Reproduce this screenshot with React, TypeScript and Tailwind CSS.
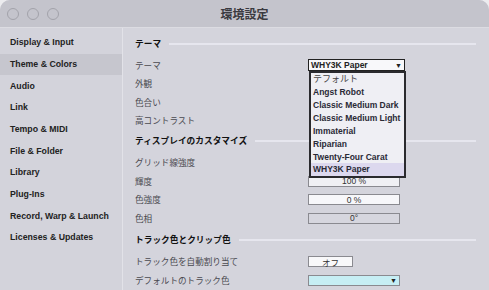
import React from 'react';

const NAV = [
  'Display & Input',
  'Theme & Colors',
  'Audio',
  'Link',
  'Tempo & MIDI',
  'File & Folder',
  'Library',
  'Plug-Ins',
  'Record, Warp & Launch',
  'Licenses & Updates',
];

const THEMES = [
  'テフォルト',
  'Angst Robot',
  'Classic Medium Dark',
  'Classic Medium Light',
  'Immaterial',
  'Riparian',
  'Twenty-Four Carat',
  'WHY3K Paper',
];

const latin = "font-['Liberation_Sans','Noto_Sans_CJK_JP',sans-serif]";
const jp = "font-['Noto_Sans_CJK_JP','Liberation_Sans',sans-serif]";

function SectionHeader({ title, className = '' }: { title: string; className?: string }) {
  return (
    <div className={`h-[20px] flex items-center pr-[13px] ${className}`}>
      <span className={`${jp} text-[8.7px] font-bold text-[#111]`}>{title}</span>
      <div className="flex-1 h-[1.5px] bg-[#e6e6ee] ml-[8px]" />
    </div>
  );
}

function Row({ label, children }: { label: string; children?: React.ReactNode }) {
  return (
    <div className="h-[18.5px] flex items-center">
      <span className={`${jp} w-[173px] text-[8.6px] text-[#4a4a50]`}>{label}</span>
      {children}
    </div>
  );
}

function ValueBox({ value, bg }: { value: string; bg: string }) {
  return (
    <div
      className={`${latin} w-[92px] h-[11px] border border-[#8a8a90] flex items-center justify-center text-[8.5px] text-[#333] leading-none ${bg}`}
    >
      {value}
    </div>
  );
}

export default function App() {
  return (
    <div className="w-[489px] h-[290px] bg-[#ececef] overflow-hidden">
      <div className="w-full h-full rounded-t-[10px] overflow-hidden flex flex-col bg-[#d4d4dc]">
        {/* Title bar */}
        <div className="relative h-[28px] bg-[#c4c4cc] border-b border-[#dcdce2] flex items-center shrink-0">
          <div className="flex gap-[8px] pl-[7px]">
            <div className="w-[12px] h-[12px] rounded-full border border-[#a2a2aa]" />
            <div className="w-[12px] h-[12px] rounded-full border border-[#a2a2aa]" />
            <div className="w-[12px] h-[12px] rounded-full border border-[#a2a2aa]" />
          </div>
          <div className={`${jp} absolute inset-0 flex items-center justify-center text-[12px] font-bold text-[#3a3a40]`}>
            環境設定
          </div>
        </div>

        <div className="flex flex-1">
          {/* Sidebar */}
          <div className="w-[123px] bg-[#d3d3db] border-r border-[#e2e2e8] pt-[4px] shrink-0">
            {NAV.map((item) => (
              <div
                key={item}
                className={`${latin} h-[21.7px] flex items-center pl-[10px] text-[8.75px] font-bold text-[#222] ${
                  item === 'Theme & Colors' ? 'bg-[#c6c6ce]' : ''
                }`}
              >
                {item}
              </div>
            ))}
          </div>

          {/* Content */}
          <div className="relative flex-1 pl-[12px] pt-[6px]">
            <SectionHeader title="テーマ" />
            <div className="mt-[2px]">
              <Row label="テーマ">
                <div className={`${latin} w-[97px] h-[12px] bg-[#f8f8fa] border border-[#222] flex items-center justify-between px-[2px] text-[8.5px] font-bold text-[#222] leading-none`}>
                  <span>WHY3K Paper</span>
                  <span className="text-[7px]">▼</span>
                </div>
              </Row>
              <Row label="外観" />
              <Row label="色合い" />
              <Row label="高コントラスト" />
            </div>

            <SectionHeader title="ティスプレイのカスタマイズ" className="mt-[1px]" />
            <div className="mt-[2.5px]">
              <Row label="グリッド線強度" />
              <Row label="輝度">
                <ValueBox value="100 %" bg="bg-[#f0f0f4]" />
              </Row>
              <Row label="色強度">
                <ValueBox value="0 %" bg="bg-[#f7f7fa]" />
              </Row>
              <Row label="色相">
                <ValueBox value="0°" bg="bg-[#d6d6de]" />
              </Row>
            </div>

            <SectionHeader title="トラック色とクリップ色" className="mt-[2.5px]" />
            <div className="mt-[2.5px]">
              <Row label="トラック色を自動割り当て">
                <div className={`${jp} w-[45px] h-[11px] bg-[#f8f8fa] border border-[#8a8a90] flex items-center justify-center text-[8.5px] text-[#333] leading-none`}>
                  オフ
                </div>
              </Row>
              <Row label="デフォルトのトラック色">
                <div className="w-[92px] h-[11px] bg-[#c6eef4] border border-[#8a8a90] flex items-center justify-end pr-[2px] text-[7px] text-[#222] leading-none">
                  ▼
                </div>
              </Row>
            </div>

            {/* Theme dropdown popup */}
            <div className="absolute left-[186px] top-[43px] w-[97px] bg-[#efeff4] border-2 border-[#2a2a2e]">
              {THEMES.map((t) => (
                <div
                  key={t}
                  className={`${latin} h-[12.9px] flex items-center pl-[2px] text-[8.5px] font-bold text-[#2a2a36] leading-none ${
                    t === 'WHY3K Paper' ? 'bg-[#dcd8ee]' : ''
                  } ${t === 'テフォルト' ? 'font-normal text-[9px] text-[#444]' : ''}`}
                >
                  {t}
                </div>
              ))}
            </div>
          </div>
        </div>
      </div>
    </div>
  );
}
